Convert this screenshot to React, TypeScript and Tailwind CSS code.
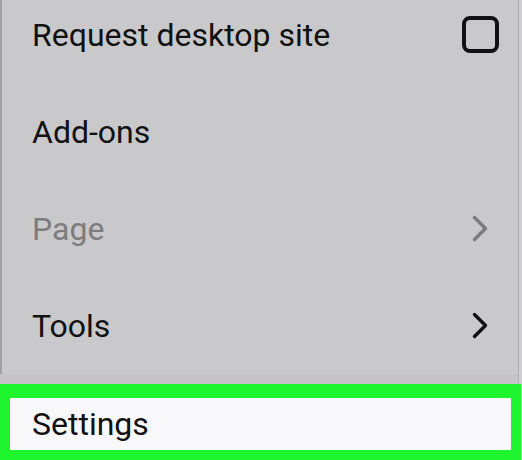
const rows = [
  { label: "Request desktop site", kind: "check" },
  { label: "Add-ons", kind: "none" },
  { label: "Page", kind: "chevron", disabled: true },
  { label: "Tools", kind: "chevron" },
];

function Chevron({ color }: { color: string }) {
  return (
    <svg width="16" height="27" viewBox="0 0 16 27" className="mr-[11px]">
      <polyline
        points="2.5,2.5 13.5,13.5 2.5,24.5"
        fill="none"
        stroke={color}
        strokeWidth="3.4"
        strokeLinecap="round"
        strokeLinejoin="round"
      />
    </svg>
  );
}

function App() {
  return (
    <div
      className="w-[522px] h-[460px] overflow-hidden bg-[#cfcfd1] flex"
      style={{ fontFamily: "Roboto, 'Liberation Sans', sans-serif" }}
    >
      <div className="w-[519px] h-full bg-[#c9c9cb] border-l-2 border-l-[#a0a0a2] border-r border-r-[#aeaeb0] flex flex-col">
        <div className="-mt-[14px] flex flex-col">
          {rows.map((row) => (
            <div
              key={row.label}
              className="h-[97px] flex items-center justify-between pl-[30px] pr-[19px]"
            >
              <span
                className={`text-[32px] leading-none ${
                  row.disabled ? "text-[#7c7c7e]" : "text-[#111]"
                }`}
              >
                {row.label}
              </span>
              {row.kind === "check" && (
                <div className="w-[37px] h-[37px] rounded-[8px] border-[4px] border-[#111]" />
              )}
              {row.kind === "chevron" && (
                <Chevron color={row.disabled ? "#7c7c7e" : "#111"} />
              )}
            </div>
          ))}
        </div>
        <div className="h-[10px] bg-[#c6c4c6] -ml-[2px]" />
        <div className="-ml-[2px] w-[521px] flex-1 border-[#1ff52f] border-t-[14px] border-x-[10px] border-b-[10px] bg-[#f8f8fa] flex items-center pl-[22px]">
          <span className="text-[32px] leading-none text-[#111]">Settings</span>
        </div>
      </div>
    </div>
  );
}

export default App;
